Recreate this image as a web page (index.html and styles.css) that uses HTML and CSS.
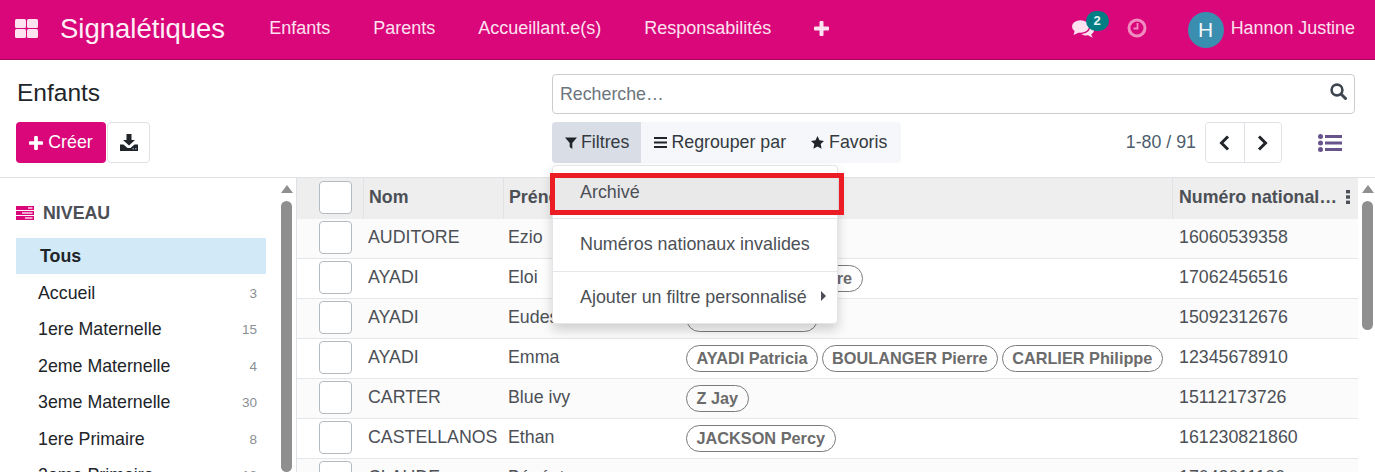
FILE: index.html
```html
<!DOCTYPE html>
<html lang="fr">
<head>
<meta charset="utf-8">
<title>Signalétiques</title>
<link rel="stylesheet" href="styles.css">
</head>
<body>
<div class="page">
  <header class="navbar">
    <svg class="apps" width="23" height="19" viewBox="0 0 23 19"><rect x="0" y="0" width="11" height="9" rx="1.5"/><rect x="12" y="0" width="11" height="9" rx="1.5"/><rect x="0" y="10" width="11" height="9" rx="1.5"/><rect x="12" y="10" width="11" height="9" rx="1.5"/></svg>
    <span class="brand">Signalétiques</span>
    <nav class="menu">
      <a>Enfants</a><a>Parents</a><a>Accueillant.e(s)</a><a>Responsabilités</a>
      <svg class="plus-nav" width="15" height="15" viewBox="0 0 15 15"><path d="M5.5 1a1 1 0 0 1 1-1h2a1 1 0 0 1 1 1v4.500H14a1 1 0 0 1 1 1v2a1 1 0 0 1-1 1H9.500V14a1 1 0 0 1-1 1h-2a1 1 0 0 1-1-1V9.500H1a1 1 0 0 1-1-1v-2a1 1 0 0 1 1-1h4.500z"/></svg>
    </nav>
    <div class="systray">
      <div class="chat">
        <svg width="22" height="18" viewBox="0 0 22 18"><ellipse cx="8.500" cy="6.500" rx="8.500" ry="6.200"/><path d="M3 10 L1.500 15 L8 12z"/><path d="M17.800 5.300C20.300 6.300 22 8.100 22 10.200c0 1.700-1.100 3.200-2.800 4.200l1.500 3.300-4.700-2.400c-.6.100-1.200.1-1.800.1-2 0-3.800-.6-5-1.500 5.600 0 9.800-3.400 9-8.600z"/></svg>
        <span class="chat-badge">2</span>
      </div>
      <svg class="clock" width="20" height="20" viewBox="0 0 20 20"><circle cx="10" cy="10" r="8" fill="none" stroke-width="3"/><path d="M10.500 5v5.500H6.500" fill="none" stroke-width="1.800"/></svg>
      <span class="avatar">H</span>
      <span class="user">Hannon Justine</span>
    </div>
  </header>

  <section class="panel">
    <div class="panel-left">
      <h1 class="title">Enfants</h1>
      <div class="actions">
        <button class="btn-create"><svg width="14" height="14" viewBox="0 0 15 15"><path d="M5.500 1a1 1 0 0 1 1-1h2a1 1 0 0 1 1 1v4.500H14a1 1 0 0 1 1 1v2a1 1 0 0 1-1 1H9.500V14a1 1 0 0 1-1 1h-2a1 1 0 0 1-1-1V9.500H1a1 1 0 0 1-1-1v-2a1 1 0 0 1 1-1h4.500z"/></svg>Créer</button>
        <button class="btn-export"><svg width="18" height="17" viewBox="0 0 18 17"><path d="M6.500 0h5v6h3.500L9 11.500 3 6h3.500z"/><path d="M0 10.500h3.500L7.500 14h3l4-3.500H18V17H0z"/><rect x="12.500" y="14" width="1.500" height="1.500" fill="#7d8a99"/><rect x="15" y="14" width="1.500" height="1.500" fill="#7d8a99"/></svg></button>
      </div>
    </div>
    <div class="panel-right">
      <div class="search">
        <span class="search-text">Recherche…</span>
        <svg width="17" height="17" viewBox="0 0 17 17"><circle cx="7" cy="7" r="5.400" fill="none" stroke="#3d4650" stroke-width="2.600"/><path d="M11 11l4.500 4.500" stroke="#3d4650" stroke-width="3" stroke-linecap="round"/></svg>
      </div>
      <div class="tools">
        <div class="filters">
          <button class="filter active"><svg width="12" height="12" viewBox="0 0 12 12"><path d="M0 .5h12L7.300 6v6L4.700 10V6z"/></svg>Filtres</button>
          <button class="filter"><svg width="13" height="11" viewBox="0 0 13 11"><path d="M0 0h13v2H0zM0 4.500h13v2H0zM0 9h13v2H0z"/></svg>Regrouper par</button>
          <button class="filter"><svg width="13" height="13" viewBox="0 0 13 13"><path d="M6.500 0l2 4.300 4.500.6-3.300 3.100.9 4.700-4.100-2.300-4.100 2.300.9-4.700L0 4.900l4.500-.6z"/></svg>Favoris</button>
        </div>
        <div class="paging">
          <span class="count">1-80 / 91</span>
          <div class="pager">
            <button><svg width="11" height="16" viewBox="0 0 11 16"><path d="M9 1.500L2.500 8 9 14.500" fill="none" stroke="#212529" stroke-width="3"/></svg></button>
            <button><svg width="11" height="16" viewBox="0 0 11 16"><path d="M2 1.500L8.500 8 2 14.500" fill="none" stroke="#212529" stroke-width="3"/></svg></button>
          </div>
          <svg class="list-view" width="24" height="18" viewBox="0 0 24 18"><circle cx="2.500" cy="2.500" r="2.500"/><circle cx="2.500" cy="9" r="2.500"/><circle cx="2.500" cy="15.500" r="2.500"/><rect x="7" y="1" width="17" height="3"/><rect x="7" y="7.500" width="17" height="3"/><rect x="7" y="14" width="17" height="3"/></svg>
        </div>
      </div>
    </div>
  </section>

  <main class="content">
    <aside class="sidebar">
      <div class="side-body">
        <div class="side-head">
          <svg width="18" height="14" viewBox="0 0 18 14"><path d="M0 0h18v4H0zM0 5h18v4H0zM0 10h18v4H0z" fill="#d9077a"/><path d="M12 1.200h4.500v1.500H12zM6 6.200h10.500v1.500H6zM9 11.200h7.500v1.500H9z" fill="#fbd5e9"/></svg>
          <span>NIVEAU</span>
        </div>
        <ul class="side-list">
          <li class="all"><span>Tous</span></li>
          <li><span>Accueil</span><small>3</small></li>
          <li><span>1ere Maternelle</span><small>15</small></li>
          <li><span>2eme Maternelle</span><small>4</small></li>
          <li><span>3eme Maternelle</span><small>30</small></li>
          <li><span>1ere Primaire</span><small>8</small></li>
          <li><span>2eme Primaire</span><small>18</small></li>
        </ul>
      </div>
      <div class="scrollbar long"><i class="arrow"></i><i class="thumb"></i></div>
    </aside>

    <div class="list">
      <table class="grid">
        <colgroup><col class="c-check"><col class="c-name"><col class="c-first"><col class="c-tags"><col class="c-num"></colgroup>
        <thead>
          <tr>
            <th class="cell-check"><span class="check"></span></th>
            <th>Nom</th>
            <th>Prénom</th>
            <th></th>
            <th class="th-num"><span>Numéro national…</span><svg width="4" height="14" viewBox="0 0 4 14"><rect y="0" width="4" height="3.400"/><rect y="5.300" width="4" height="3.400"/><rect y="10.600" width="4" height="3.400"/></svg></th>
          </tr>
        </thead>
        <tbody>
          <tr><td class="cell-check"><span class="check"></span></td><td>AUDITORE</td><td>Ezio</td><td></td><td>16060539358</td></tr>
          <tr><td class="cell-check"><span class="check"></span></td><td>AYADI</td><td>Eloi</td><td><span class="pill">BOULANGER Pierre</span></td><td>17062456516</td></tr>
          <tr><td class="cell-check"><span class="check"></span></td><td>AYADI</td><td>Eudes</td><td><span class="pill">AYADI Patricia</span></td><td>15092312676</td></tr>
          <tr><td class="cell-check"><span class="check"></span></td><td>AYADI</td><td>Emma</td><td><span class="pill">AYADI Patricia</span><span class="pill">BOULANGER Pierre</span><span class="pill">CARLIER Philippe</span></td><td>12345678910</td></tr>
          <tr><td class="cell-check"><span class="check"></span></td><td>CARTER</td><td>Blue ivy</td><td><span class="pill">Z Jay</span></td><td>15112173726</td></tr>
          <tr><td class="cell-check"><span class="check"></span></td><td>CASTELLANOS</td><td>Ethan</td><td><span class="pill">JACKSON Percy</span></td><td>161230821860</td></tr>
          <tr><td class="cell-check"><span class="check"></span></td><td>CLAUDE</td><td>Bénéat</td><td></td><td>17042011100</td></tr>
        </tbody>
      </table>
      <div class="scrollbar short"><i class="arrow"></i><i class="thumb"></i></div>
    </div>
  </main>

  <div class="dropdown">
    <div class="dd-item selected">Archivé</div>
    <div class="dd-sep"></div>
    <div class="dd-item">Numéros nationaux invalides</div>
    <div class="dd-sep"></div>
    <div class="dd-item">Ajouter un filtre personnalisé<i class="caret"></i></div>
  </div>
  <div class="annotation"></div>
</div>
</body>
</html>
```
FILE: styles.css
```css
* { box-sizing: border-box; }
html, body { margin: 0; padding: 0; }
body { font-family: "Liberation Sans", Arial, sans-serif; font-size: 17.8px; color: #4c5056; background: #fff; overflow: hidden; }
.page { position: relative; width: 1375px; height: 472px; overflow: hidden; display: flex; flex-direction: column; }
button { font: inherit; cursor: pointer; }

/* navbar */
.navbar { flex: none; height: 60px; background: #d9077a; border-bottom: 1px solid #a30a5e; display: flex; align-items: center; padding: 0 20px 0 15px; color: #fde2f0; font-size: 18px; }
.apps { fill: #fde2f0; flex: none; margin-top: -2px; }
.brand { font-size: 27.5px; margin-left: 22px; color: #fff0f8; margin-top: -1px; }
.menu { display: flex; align-items: center; gap: 43px; margin-left: 44px; margin-top: -3px; }
.plus-nav { fill: #fde2f0; margin-top: 1px; }
.systray { margin-left: auto; display: flex; align-items: center; }
.chat { position: relative; width: 22px; height: 18px; margin-top: -1px; }
.chat svg { fill: #fde2f0; display: block; }
.chat-badge { position: absolute; left: 14px; top: -9px; width: 23px; height: 20px; border-radius: 10px; background: #017e84; color: #e6f3f3; font-size: 13px; font-weight: 700; text-align: center; line-height: 19px; }
.clock { margin-left: 33px; stroke: #f08cc0; margin-top: -3px; }
.avatar { width: 36px; height: 36px; border-radius: 50%; background: #3a8fb0; color: #f2f8fb; font-size: 21px; display: flex; align-items: center; justify-content: center; margin-left: 41px; }
.user { margin-left: 7px; margin-top: -3px; font-size: 17.9px; }

/* control panel */
.panel { flex: none; height: 118px; border-bottom: 1px solid #dee2e6; padding: 14px 20px 0 16px; display: flex; }
.panel-left { width: 536px; flex: none; }
.title { margin: 0; padding-left: 1px; font-size: 24.5px; font-weight: 400; color: #212529; line-height: 38px; }
.actions { display: flex; margin-top: 10px; }
.btn-create { width: 90px; height: 41px; background: #d9077a; color: #fff; border: 0; border-radius: 4px; padding: 0; display: flex; align-items: center; justify-content: center; gap: 5px; }
.btn-create svg { fill: #fff; }
.btn-export { width: 43px; height: 41px; margin-left: 1px; background: #fff; border: 1px solid #dee2e6; border-radius: 4px; padding: 0; display: flex; align-items: center; justify-content: center; }
.btn-export svg { fill: #212529; }
.panel-right { flex: 1; min-width: 0; }
.search { height: 40px; border: 1px solid #ccc; border-radius: 4px; display: flex; align-items: center; justify-content: space-between; padding: 0 7px; }
.search svg { margin-top: -6px; }
.search-text { color: #6c757d; padding-top: 1px; }
.tools { display: flex; justify-content: space-between; margin-top: 8px; }
.filters { display: flex; height: 41px; background: #f5f7fa; border-radius: 4px; overflow: hidden; }
.filter { border: 0; background: transparent; color: #343a40; display: flex; align-items: center; gap: 4px; padding: 0 12px 0 13px; }
.filter:nth-child(2) { padding: 0 25px 0 13px; }
.filter:nth-child(3) { padding: 0 14px 0 0; gap: 5px; }
.filter svg { fill: #212529; flex: none; }
.filter.active { background: #d8dde6; }
.paging { display: flex; align-items: center; }
.count { color: #4c5c6c; }
.pager { display: flex; height: 41px; margin-left: 9px; border: 1px solid #dee2e6; border-radius: 4px; }
.pager button { width: 37.5px; background: #fff; border: 0; padding: 0; border-radius: 4px; display: flex; align-items: center; justify-content: center; }
.pager button + button { border-left: 1px solid #dee2e6; border-radius: 0 4px 4px 0; }
.list-view { fill: #67548c; margin: 0 13px 0 36px; }

/* content */
.content { flex: 1; min-height: 0; display: flex; overflow: hidden; }
.sidebar { width: 297px; flex: none; display: flex; border-right: 1px solid #dee2e6; }
.side-body { width: 278px; flex: none; padding: 0 12px 0 16px; }
.side-head { display: flex; align-items: center; gap: 9px; height: 20px; margin-top: 25px; font-weight: 700; color: #4c5056; }
.side-list { list-style: none; margin: 15px 0 0; padding: 0; color: #212529; }
.side-list li { height: 36.5px; display: flex; align-items: center; justify-content: space-between; padding: 0 9px 0 22px; }
.side-list .all { height: 36px; margin-bottom: 1px; background: #d2eaf7; font-weight: 700; padding-left: 24px; }
.side-list small { font-size: 13.500px; color: #8a8f94; }
.scrollbar { flex: none; width: 17px; background: #fff; position: relative; display: flex; flex-direction: column; align-items: center; }
.arrow { width: 0; height: 0; margin-top: 7px; border-left: 6px solid transparent; border-right: 6px solid transparent; border-bottom: 8px solid #8f8f8f; }
.thumb { width: 11px; margin-top: 8px; background: #8f8f8f; border-radius: 6px; }
.scrollbar.long .thumb { height: 400px; }
.scrollbar.short { padding-left: 2px; }
.scrollbar.short .thumb { height: 129px; }

.list { flex: 1; min-width: 0; display: flex; }
.grid { width: 1061px; flex: none; table-layout: fixed; border-collapse: separate; border-spacing: 0; align-self: flex-start; }
.c-check { width: 66px; } .c-name { width: 140px; } .c-first { width: 177px; } .c-tags { width: 492px; } .c-num { width: 186px; }
.grid th { height: 41px; background: #eeeeee; text-align: left; font-weight: 700; padding: 0 0 2px 5px; border-left: 1px solid #e0e2e5; white-space: nowrap; overflow: hidden; color: #4c5056; }
.grid th:nth-child(4) { border-left: 0; }
.grid th.cell-check { border-left: 0; }
.grid th.th-num { padding-left: 6px; }
.th-num span { margin-right: 9px; }
.th-num svg { fill: #4c5056; vertical-align: -1px; }
.grid td { height: 40px; padding: 0 0 2px 5px; border-bottom: 1px solid #e4e7ea; white-space: nowrap; overflow: hidden; }
.grid td:last-child { padding-left: 7px; }
.grid tbody tr:nth-child(odd) td { background: #fbfbfb; }
.grid td.cell-check, .grid th.cell-check { padding: 0 0 2px 22px; }
.check { display: block; width: 33px; height: 33px; background: #fff; border: 1px solid #b5bbc2; border-radius: 4px; }
.grid td:nth-child(4) { padding-left: 6px; padding-bottom: 0; }
.pill { display: inline-block; height: 27px; line-height: 25px; padding: 0 9.5px; margin-right: 3.5px; border: 1px solid #7a7a7a; border-radius: 14px; font-size: 16.3px; font-weight: 700; color: #6b6b6b; vertical-align: middle; }

/* dropdown */
.dropdown { position: absolute; left: 552px; top: 165px; width: 286px; height: 159px; background: #fff; border: 1px solid #e3e5e8; border-radius: 4px; box-shadow: 0 6px 12px rgba(0,0,0,.175); padding-top: 9px; font-size: 17.9px; }
.dd-item { height: 40px; line-height: 38px; padding-left: 27px; color: #4c5056; position: relative; }
.dd-item.selected { height: 37px; background: #e9e9e9; line-height: 34px; }
.dd-sep { height: 1px; background: #e4e7ea; margin-top: 6px; margin-bottom: 6px; }
.caret { position: absolute; left: 268px; top: 13px; width: 0; height: 0; border-top: 5px solid transparent; border-bottom: 5px solid transparent; border-left: 5px solid #4c5056; }
.annotation { position: absolute; left: 550px; top: 173px; width: 294px; height: 42px; border: 5px solid #ec1c24; pointer-events: none; }
```
